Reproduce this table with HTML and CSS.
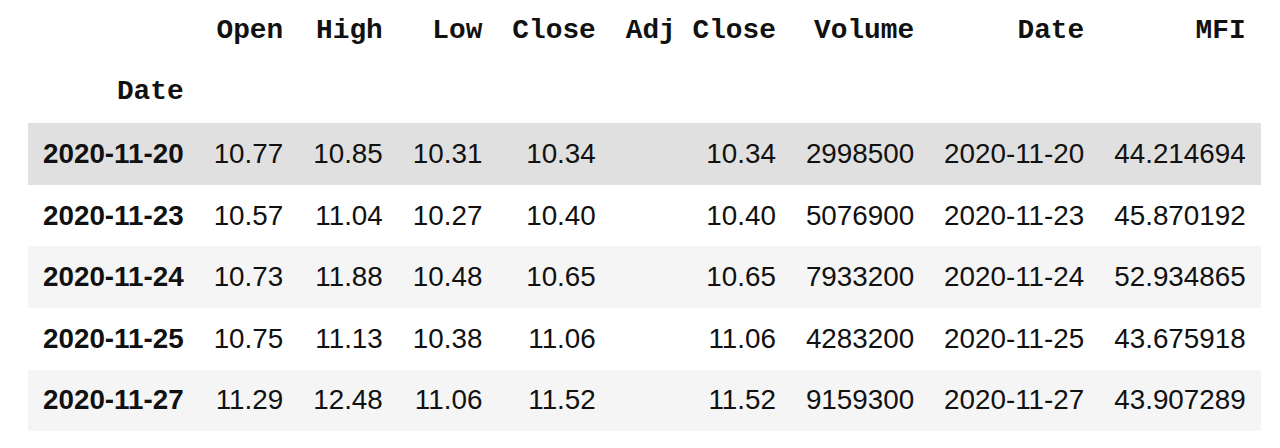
FILE: index.html
```html
<!DOCTYPE html>
<html>
<head>
<meta charset="utf-8">
<link rel="stylesheet" href="styles.css">
</head>
<body>
<div class="wrap">
<table class="df">
  <thead>
    <tr class="cols">
      <th class="blank"></th>
      <th>Open</th>
      <th>High</th>
      <th>Low</th>
      <th>Close</th>
      <th>Adj Close</th>
      <th>Volume</th>
      <th>Date</th>
      <th>MFI</th>
    </tr>
    <tr class="idxname">
      <th>Date</th>
      <th></th><th></th><th></th><th></th><th></th><th></th><th></th><th></th>
    </tr>
  </thead>
  <tbody>
    <tr class="hover">
      <th>2020-11-20</th><td>10.77</td><td>10.85</td><td>10.31</td><td>10.34</td><td>10.34</td><td>2998500</td><td>2020-11-20</td><td>44.214694</td>
    </tr>
    <tr>
      <th>2020-11-23</th><td>10.57</td><td>11.04</td><td>10.27</td><td>10.40</td><td>10.40</td><td>5076900</td><td>2020-11-23</td><td>45.870192</td>
    </tr>
    <tr class="odd">
      <th>2020-11-24</th><td>10.73</td><td>11.88</td><td>10.48</td><td>10.65</td><td>10.65</td><td>7933200</td><td>2020-11-24</td><td>52.934865</td>
    </tr>
    <tr>
      <th>2020-11-25</th><td>10.75</td><td>11.13</td><td>10.38</td><td>11.06</td><td>11.06</td><td>4283200</td><td>2020-11-25</td><td>43.675918</td>
    </tr>
    <tr class="odd">
      <th>2020-11-27</th><td>11.29</td><td>12.48</td><td>11.06</td><td>11.52</td><td>11.52</td><td>9159300</td><td>2020-11-27</td><td>43.907289</td>
    </tr>
  </tbody>
</table>
</div>
</body>
</html>
```
FILE: styles.css
```css
html, body {
  margin: 0;
  padding: 0;
  background: #ffffff;
}

.wrap {
  padding-left: 28px;
}

.df {
  border-collapse: collapse;
  border-spacing: 0;
  font-family: "Liberation Sans", Arial, sans-serif;
  font-size: 27.8px;
  color: #111;
}

.df th,
.df td {
  height: 61.6px;
  padding: 0 15px;
  text-align: right;
  vertical-align: middle;
  white-space: nowrap;
  line-height: 1;
  box-sizing: border-box;
}

.df td {
  font-weight: normal;
}

.df thead th {
  font-family: "Liberation Mono", "Courier New", monospace;
  font-weight: bold;
}

.df tbody th {
  font-weight: bold;
}

.df tbody tr.odd {
  background: #f5f5f5;
}

.df tbody tr.hover {
  background: #e0e0e0;
}
```
